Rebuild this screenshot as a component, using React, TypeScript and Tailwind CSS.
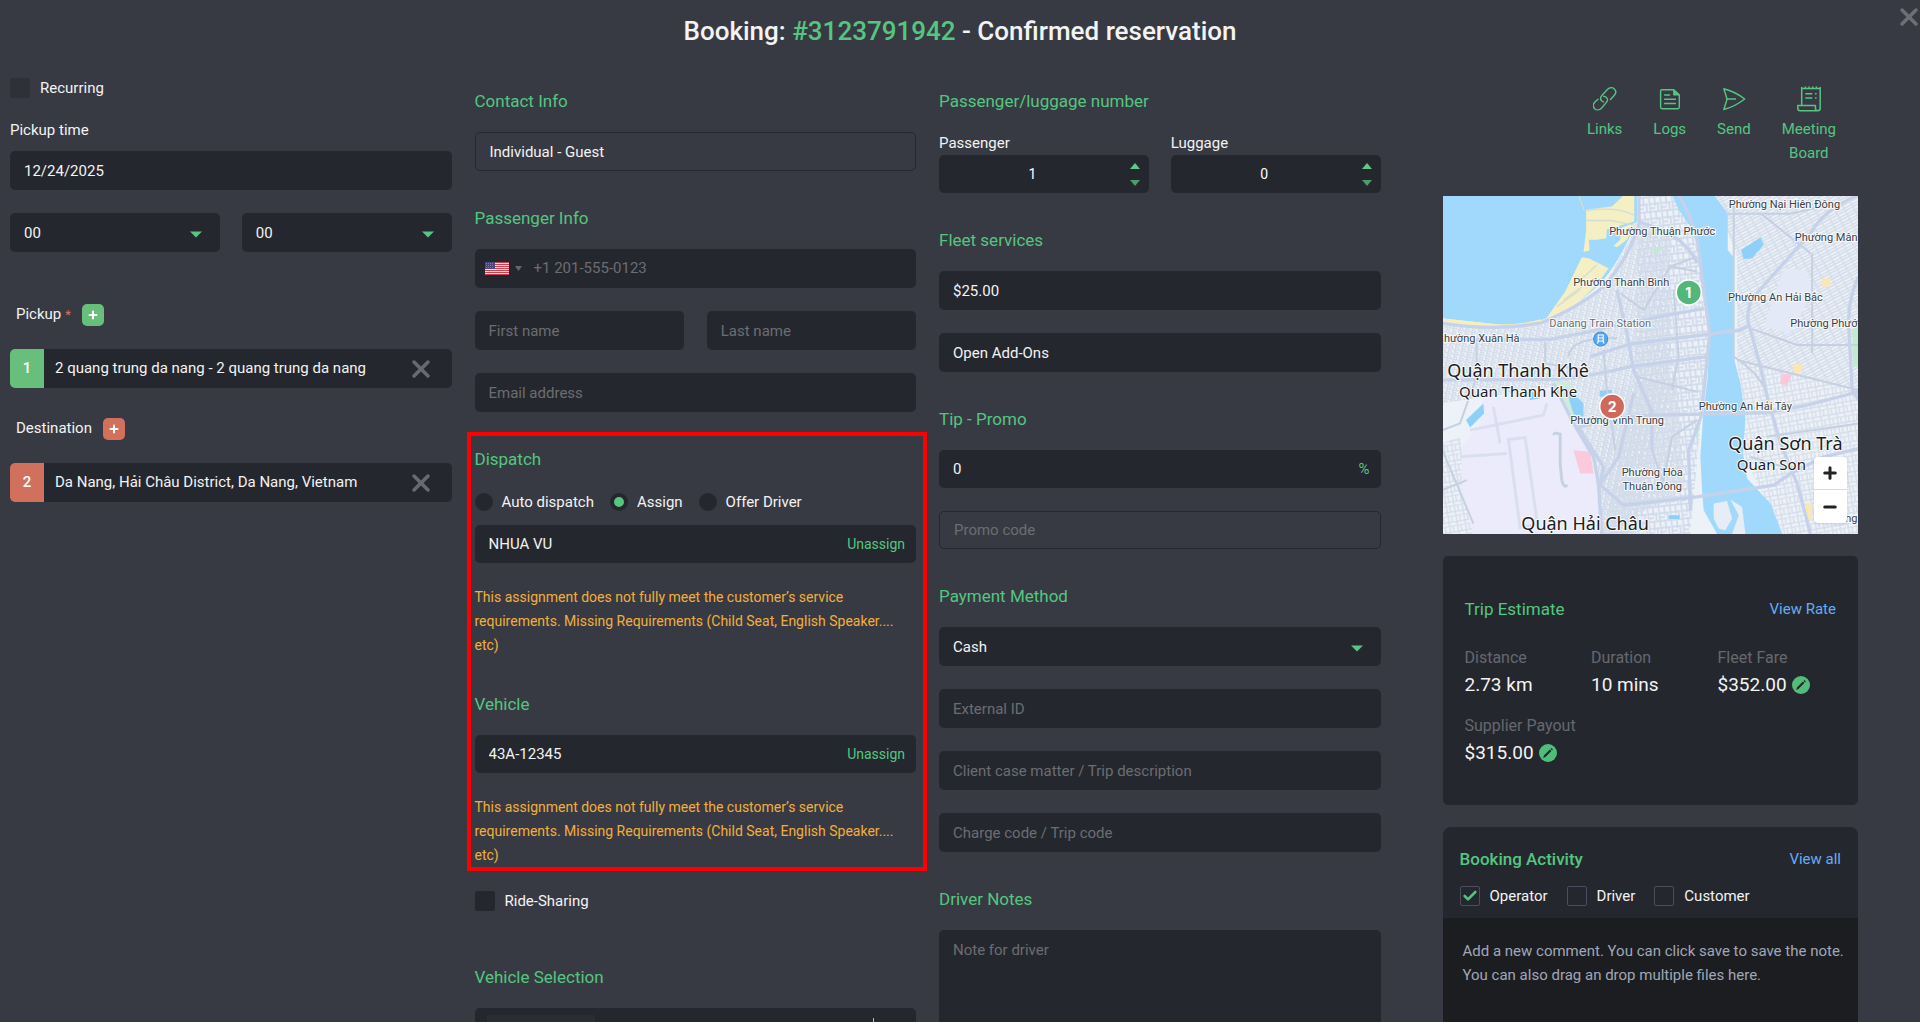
import { useState } from "react";
import type { ReactNode } from "react";
import clsx from "clsx";
import { Check, Minus, Plus, X } from "lucide-react";

const FIELD =
  "h-[39px] w-full rounded-[5px] bg-[#25272e] px-[14px] text-[15px] leading-6 text-[#f3f3f4] outline-none placeholder:text-[#6c6d72] placeholder:opacity-100";
const OUTLINED =
  "w-full rounded-[5px] border border-[#25272e] bg-transparent px-[14px] text-[15px] leading-6 text-[#f3f3f4] outline-none placeholder:text-[#6c6d72] placeholder:opacity-100";

const WARNING =
  "This assignment does not fully meet the customer’s service requirements. Missing Requirements (Child Seat, English Speaker.... etc)";

function Heading({ children }: { children: ReactNode }) {
  return (
    <h2 className="mb-[19px] text-[17px] leading-6 text-[#54c680]">
      {children}
    </h2>
  );
}

function Section({ title, children }: { title: string; children: ReactNode }) {
  return (
    <section>
      <Heading>{title}</Heading>
      <div className="flex flex-col gap-[23px]">{children}</div>
    </section>
  );
}

function Caret({ className }: { className?: string }) {
  return (
    <svg viewBox="0 0 12 7" className={clsx("h-[7px] w-3", className)} aria-hidden>
      <path d="M0 0.5h12l-6 6z" fill="currentColor" />
    </svg>
  );
}

function SelectBox({ label, options }: { label: string; options: string[] }) {
  return (
    <div className="relative w-full">
      <select aria-label={label} className={clsx(FIELD, "appearance-none")}>
        {options.map((o) => (
          <option key={o}>{o}</option>
        ))}
      </select>
      <Caret className="pointer-events-none absolute top-[18px] right-[18px] text-[#54c680]" />
    </div>
  );
}

function Counter({ label, initial }: { label: string; initial: number }) {
  const [value, setValue] = useState(initial);
  return (
    <div className="w-full">
      <label
        htmlFor={label}
        className="block text-[15px] leading-[23px] text-[#f3f3f4]"
      >
        {label}
      </label>
      <div className="flex h-[38px] items-center rounded-[5px] bg-[#25272e] pr-[9px]">
        <input
          id={label}
          value={value}
          onChange={(e) => setValue(Number(e.target.value) || 0)}
          className="w-full min-w-0 bg-transparent pr-1 text-center text-sm text-white outline-none"
        />
        <div className="flex flex-col gap-[11px]">
          <button
            type="button"
            aria-label={`More ${label}`}
            onClick={() => setValue((v) => v + 1)}
          >
            <svg viewBox="0 0 10 6" className="block h-[6px] w-[10px] text-[#5fc885]">
              <path d="M0 6h10L5 0z" fill="currentColor" />
            </svg>
          </button>
          <button
            type="button"
            aria-label={`Fewer ${label}`}
            onClick={() => setValue((v) => Math.max(0, v - 1))}
          >
            <svg viewBox="0 0 10 6" className="block h-[6px] w-[10px] text-[#4d9c69]">
              <path d="M0 0h10L5 6z" fill="currentColor" />
            </svg>
          </button>
        </div>
      </div>
    </div>
  );
}

function CheckBox({
  label,
  checked = false,
  boxClass,
}: {
  label: string;
  checked?: boolean;
  boxClass: string;
}) {
  return (
    <label className="flex items-center gap-[10px] text-[15px] leading-6 text-[#f3f3f4]">
      <span className="relative flex size-5">
        <input
          type="checkbox"
          defaultChecked={checked}
          className={clsx("peer size-5 appearance-none rounded-[2px]", boxClass)}
        />
        <Check
          className="pointer-events-none absolute inset-[2px] hidden size-4 text-[#4fc47c] peer-checked:block"
          strokeWidth={4}
        />
      </span>
      {label}
    </label>
  );
}

function Radio({ label, checked = false }: { label: string; checked?: boolean }) {
  return (
    <label className="flex items-center gap-[9px] text-[15px] leading-6 text-[#f3f3f4]">
      <input
        type="radio"
        name="dispatch"
        defaultChecked={checked}
        className="size-[18px] appearance-none rounded-full border-[4px] border-[#25272e] bg-[#25272e] checked:bg-[#54c680]"
      />
      {label}
    </label>
  );
}

function Stop({
  index,
  address,
  tone,
}: {
  index: number;
  address: string;
  tone: string;
}) {
  return (
    <div className="flex h-[39px] overflow-hidden rounded-[5px] bg-[#25272e]">
      <span
        className={clsx(
          "flex w-[34px] shrink-0 items-center justify-center text-[15px] font-medium text-white",
          tone,
        )}
      >
        {index}
      </span>
      <input
        aria-label={`Stop ${index}`}
        defaultValue={address}
        className="min-w-0 flex-1 bg-transparent pl-[11px] text-[15px] text-[#f3f3f4] outline-none"
      />
      <button
        type="button"
        aria-label="Remove stop"
        className="pr-[17px] pl-4 text-[#686a72]"
      >
        <X className="size-7" strokeWidth={3} />
      </button>
    </div>
  );
}

function StopLabel({
  text,
  tone,
  required,
}: {
  text: string;
  tone: string;
  required?: boolean;
}) {
  return (
    <div className="flex h-[23px] items-center pl-[6px] text-[15px] text-[#f3f3f4]">
      {text}
      {required && <span className="pl-1 text-[13px] text-[#e2705c]">*</span>}
      <button
        type="button"
        aria-label={`Add ${text}`}
        className={clsx(
          "ml-[11px] flex size-[22px] items-center justify-center rounded-[5px] text-white",
          tone,
        )}
      >
        <Plus className="size-[12px]" strokeWidth={4} />
      </button>
    </div>
  );
}

function Assignment({
  title,
  value,
  children,
}: {
  title: string;
  value: string;
  children?: ReactNode;
}) {
  return (
    <section>
      <Heading>{title}</Heading>
      {children}
      <div className="flex h-[38px] items-center rounded-[5px] bg-[#25272e] px-[11px]">
        <input
          aria-label={title}
          defaultValue={value}
          className="min-w-0 flex-1 bg-transparent pl-[3px] text-[15px] text-[#f3f3f4] outline-none"
        />
        <button type="button" className="text-sm text-[#54c680]">
          Unassign
        </button>
      </div>
      <p className="mt-[22px] text-sm leading-6 text-[#f3ae3d]">{WARNING}</p>
    </section>
  );
}

function UsFlag() {
  return (
    <svg viewBox="0 0 24 13" className="h-[13px] w-6" aria-hidden>
      <rect width="24" height="13" fill="#e9dfe2" />
      {[0, 2, 4, 6, 8, 10, 12].map((y) => (
        <rect key={y} y={y} width="24" height="1" fill="#c9404f" />
      ))}
      <rect width="10" height="7" fill="#4a477f" />
      <path
        d="M1 1.5h8M1 3.5h8M1 5.5h8"
        stroke="#8e8bb5"
        strokeWidth="0.7"
        strokeDasharray="1 1"
      />
    </svg>
  );
}

function LinksIcon() {
  return (
    <svg viewBox="0 0 24 24" fill="none" stroke="currentColor" strokeWidth="1.4" strokeLinecap="round" className="size-6">
      <path d="M8.3 13.2c-1.6-1.9-.2-4 1-5.2L14.6 2.3c2-2 4.9-2.1 6.7-.4 1.9 1.9 1.7 4.7-.2 6.7l-3.6 3.8" />
      <path d="M10.7 9.3c1.5.3 3.3 1.2 3.7 2.6.4 1.3-.3 2.8-1.4 4l-4.6 5.4c-2 2-4.9 2.1-6.7.4-1.9-1.9-1.7-4.7.2-6.7L5 12.2" />
      <path d="M8.3 13.2c.5 1 1.3 1.6 2.3 1.7" />
    </svg>
  );
}

function LogsIcon() {
  return (
    <svg viewBox="0 0 24 24" fill="none" stroke="currentColor" strokeWidth="1.4" strokeLinecap="round" strokeLinejoin="round" className="size-6">
      <path d="M4 2.7h11.5L21.3 8v12.3a1.4 1.4 0 0 1-1.4 1.4H4a1.4 1.4 0 0 1-1.4-1.4V4.1A1.4 1.4 0 0 1 4 2.7z" />
      <path d="M15.8 2.9V7.8h5.2z" fill="currentColor" />
      <path d="M6.6 8h5M6.6 12.2h10.8M6.6 16.5h10.8" />
    </svg>
  );
}

function SendIcon() {
  return (
    <svg viewBox="0 0 24 24" fill="none" stroke="currentColor" strokeWidth="1.4" strokeLinecap="round" strokeLinejoin="round" className="size-6">
      <path d="M1.8 1.8C9 3.6 16.5 7.3 22.7 12 16.5 16.8 9.5 20.6 1.8 22.5c1.2-3.5 2.4-7 3.2-10.5-1-3.5-2-6.9-3.2-10.2z" />
      <path d="M5 12h8.5" />
    </svg>
  );
}

function BoardIcon() {
  return (
    <svg viewBox="0 0 24 26" fill="none" stroke="currentColor" strokeWidth="1.5" strokeLinejoin="round" className="h-[26px] w-6">
      <path d="M4.7 19.4V2M23.2 2v20.3a2.5 2.5 0 0 1-2.5 2.5H3.2A2.5 2.5 0 0 1 .8 22.3v-2.9h17.6v2.9a2.5 2.5 0 0 0 2.3 2.5" />
      <path d="M4.7 1v1.6h18.5V1M8.4 .5v2M12 .5v2M15.7 .5v2M19.4 .5v2" />
      <path d="M8.3 7.8h7M8.3 12h7M18 7.8h1.6M18 12h1.6" />
    </svg>
  );
}

const ACTIONS = [
  { label: "Links", icon: <LinksIcon /> },
  { label: "Logs", icon: <LogsIcon /> },
  { label: "Send", icon: <SendIcon /> },
  { label: "Meeting Board", icon: <BoardIcon /> },
];

function EditButton({ label }: { label: string }) {
  return (
    <button
      type="button"
      aria-label={label}
      className="flex size-[18px] items-center justify-center rounded-full bg-[#52bd7b]"
    >
      <svg viewBox="0 0 18 18" className="size-[18px]" aria-hidden>
        <path d="M4.2 13.9l.7-2.3 6-6 1.5 1.5-6 6zM11.6 4.9l.8-.8 1.5 1.5-.8.8z" fill="#25272e" />
      </svg>
    </button>
  );
}

const TRIP = [
  { label: "Distance", value: "2.73 km" },
  { label: "Duration", value: "10 mins" },
  { label: "Fleet Fare", value: "$352.00", editable: true },
  { label: "Supplier Payout", value: "$315.00", editable: true },
];

type Place = {
  x: number;
  y: number;
  text: string;
  size?: number;
  fill?: string;
  anchor?: "start" | "end";
};

const PLACES: Place[] = [
  { x: 341, y: 12, text: "Phường Nại Hiên Đông" },
  { x: 219, y: 39, text: "Phường Thuận Phước" },
  { x: 414, y: 45, text: "Phường Mân", anchor: "end" },
  { x: 178, y: 90, text: "Phường Thanh Bình" },
  { x: 332, y: 105, text: "Phường An Hải Bắc" },
  { x: 157, y: 131, text: "Danang Train Station", fill: "#6a6d74" },
  { x: 414, y: 131, text: "Phường Phướ", anchor: "end" },
  { x: 1, y: 146, text: "hường Xuân Hà", anchor: "start" },
  { x: 75, y: 181, size: 18, text: "Quận Thanh Khê" },
  { x: 75, y: 201, size: 15, text: "Quan Thanh Khe" },
  { x: 302, y: 214, text: "Phường An Hải Tây" },
  { x: 174, y: 228, text: "Phường Vĩnh Trung" },
  { x: 342, y: 254, size: 18, text: "Quận Sơn Trà" },
  { x: 328, y: 274, size: 15, text: "Quan Son" },
  { x: 209, y: 280, text: "Phường Hòa" },
  { x: 209, y: 294, text: "Thuận Đông" },
  { x: 142, y: 334, size: 18, text: "Quận Hải Châu" },
  { x: 414, y: 326, text: "ng", anchor: "end" },
];

const MAJOR_ROADS = [
  "M37 400Q200 425 335 398Q450 350 520 290Q600 200 626 100V15",
  "M626 95Q700 120 745 150Q790 190 800 220",
  "M745 15Q800 110 806 190L820 300L838 430L825 560L812 680L775 780L780 960",
  "M37 450L360 448L480 425L560 405L820 355",
  "M480 500L600 462L840 432L930 420L960 405",
  "M37 570L380 568Q480 560 600 530L830 500",
  "M560 300L590 430L610 540L665 665V780",
  "M440 712Q560 680 665 675L1010 668L1130 645L1284 605",
  "M370 580L430 700L490 800L505 880L515 1031",
  "M505 880L580 945L800 920L1030 885L1080 850L1180 800L1284 775",
  "M1284 15Q1180 60 1140 130L970 320Q940 370 960 420Q990 520 1010 620L1050 760L1100 880L1140 1031",
  "M1284 260Q1250 330 1255 420L1265 600L1284 630",
  "M505 890L565 800L610 610",
  "M445 712L520 830L510 880",
];

const MINOR_ROADS = [
  "M910 40V510M893 72H1080L1200 45M990 70L1140 190",
  "M1145 190V490M960 415L1100 465H1284M920 510L1284 600",
  "M415 500Q420 440 560 445M345 455V520L470 540M140 455V560",
  "M570 310L640 360L720 230L800 200M720 230L800 245",
  "M520 480L530 600L555 780M730 300L745 500L725 600",
  "M700 870L725 740L800 690M620 560L800 605M665 780L700 880",
  "M910 500Q1000 560 1010 620M1010 740L1284 700M960 800L1090 840",
  "M140 560L90 700L37 720M37 780L130 1000M37 900L110 870",
];

function TripMap() {
  return (
    <div className="relative">
      <svg
        viewBox="0 0 415 338"
        preserveAspectRatio="xMidYMid slice"
        className="block h-[338px] w-full"
        fontFamily='"Noto Sans", sans-serif'
        role="img"
        aria-label="Trip map"
      >
        <defs>
          <pattern id="dense" width="19" height="15" patternUnits="userSpaceOnUse" patternTransform="rotate(12)">
            <path d="M0 2H19M3 0V15M12 7V15M0 9H12" stroke="#d3dce9" strokeWidth="4" fill="none" />
          </pattern>
          <pattern id="blocks" width="34" height="44" patternUnits="userSpaceOnUse" patternTransform="rotate(-6)">
            <path d="M0 3H34M4 0V44M20 0V30M4 24H34M28 24V44M4 36H20" stroke="#d0daea" strokeWidth="5" fill="none" />
          </pattern>
          <pattern id="east" width="26" height="18" patternUnits="userSpaceOnUse" patternTransform="rotate(-28)">
            <path d="M0 2H26M3 0V18M3 10H26" stroke="#d3dce9" strokeWidth="4" fill="none" />
          </pattern>
          <pattern id="southeast" width="24" height="30" patternUnits="userSpaceOnUse" patternTransform="rotate(-10)">
            <path d="M0 2H24M3 0V30M13 12V30M3 14H24" stroke="#d5ddea" strokeWidth="4" fill="none" />
          </pattern>
        </defs>
        <g transform="translate(-13 -6) scale(0.3334)">
          <rect x="30" y="10" width="1260" height="1030" fill="#edf2f8" />
          <path d="M37 400H335L520 290L626 100L720 120V600L610 1031H505L430 700L370 590L37 640z" fill="url(#dense)" />
          <path d="M626 15H745L806 190L838 430L812 680L780 1031H515L610 610z" fill="url(#blocks)" />
          <path d="M515 600L740 560L760 900L515 1031z" fill="url(#dense)" />
          <path d="M850 15H1284V600L920 510V200z" fill="url(#east)" />
          <path d="M920 510L1284 600V1031H1060L940 800z" fill="url(#southeast)" />
          <path d="M37 760L90 740L130 1031H37z" fill="url(#southeast)" />

          {/* airport */}
          <path d="M160 625L370 602L430 710L490 805L500 900L508 1031H130L95 900V770L150 700z" fill="#ebebfc" />
          <path d="M235 748L285 742L322 1002L270 1012zM120 720L340 675M210 760L190 650M90 800L230 790M340 675L350 640" stroke="#dadff0" strokeWidth="9" fill="none" />
          <path d="M372 735Q370 725 390 732V820L395 870Q400 895 412 885" stroke="#c7d2e0" strokeWidth="9" fill="none" />
          <path d="M370 574H420L455 640L458 700L430 700z" fill="#cfeadf" />
          <path d="M1060 235L1125 240L1150 300L1080 430L1000 410z" fill="#e3e9f6" />

          {/* water */}
          <path d="M37 15H620V95Q560 230 510 280Q440 350 335 390Q270 408 200 403L37 385z" fill="#a1d9fc" />
          <path d="M725 15H850L892 70V180L908 200L912 510L930 580L945 680L938 790L950 865L1020 940L1056 1031H860L820 960L815 900L810 800L818 680L832 560L838 430L820 300L810 190L780 110L745 60z" fill="#a1d9fc" />
          <path d="M850 940L890 932L905 985L885 1020L865 1015L850 985zM900 928L935 950L945 1031H905L925 975z" fill="#e6edf5" />
          <path d="M932 180L990 142L1000 165L965 205L940 208zM108 690L160 640L162 670L120 712zM405 590L440 620L460 640V680L430 672zM290 605H330V625L300 630zM508 602L545 600V620H508zM715 975H748V986H715z" fill="#8fd0f8" />

          {/* sand */}
          <path d="M37 385L200 403Q270 405 332 388L336 400Q260 420 180 414L37 398z" fill="#f6eebc" />
          <path d="M468 60L545 50L580 17H612V95L530 118L528 145L500 150H476L478 182L460 186L468 120zM550 168L570 150L575 112L618 98L590 150L560 172z" fill="#f5f0c4" />
          <path d="M455 202L475 205L535 235L500 285L430 350L345 390L405 305z" fill="#f5f0c4" />
          <path d="M470 62Q560 50 610 75M470 92H540L610 105M445 15L462 62M430 290L500 225M400 330L490 265M380 350L450 300" stroke="#d6dcd0" strokeWidth="4" fill="none" />
          <path d="M430 780L480 785L490 850L450 850zM1055 550L1085 553L1070 587L1048 580z" fill="#fbc9dc" />
          <path d="M1175 265H1200V290H1175zM1090 520L1118 525L1110 550H1090zM1125 940L1145 938V990H1125z" fill="#fbe6b8" />
          <path d="M1265 420L1284 410V530H1268zM672 175L688 170V188H672zM790 715L810 710L800 745z" fill="#bfeccb" />

          {MINOR_ROADS.map((d) => (
            <path key={d} d={d} stroke="#c5d1e2" strokeWidth="6" fill="none" />
          ))}
          {MAJOR_ROADS.map((d) => (
            <path key={d} d={d} stroke="#c6d2ea" strokeWidth="10" strokeLinejoin="round" fill="none" />
          ))}
        </g>

        <circle cx="157.5" cy="143" r="7" fill="#5aa9ec" stroke="#3f8fd6" strokeWidth="1" />
        <path d="M155 139h5v6h-5zM155 142h5M155.5 145l-1.5 2.5M159.5 145l1.5 2.5" stroke="#fff" strokeWidth="1.1" fill="none" />

        {PLACES.map((p) => (
          <text
            key={p.text}
            x={p.x}
            y={p.y}
            fontSize={p.size ?? 11}
            fontFamily={p.size ? undefined : "Roboto, sans-serif"}
            textAnchor={p.anchor ?? "middle"}
            fill={p.fill ?? (p.size ? "#1c1d20" : "#3b3e44")}
            stroke="#f7fafd"
            strokeWidth="2"
            strokeLinejoin="round"
            paintOrder="stroke"
          >
            {p.text}
          </text>
        ))}

        <g fontSize="14" fontWeight="700" fontFamily="Inter, sans-serif" fill="#fff" textAnchor="middle">
          <circle cx="245.5" cy="96.5" r="12.5" fill="#52b779" stroke="#fff" strokeWidth="1.5" />
          <text x="245" y="102">1</text>
          <circle cx="169" cy="210.5" r="12.5" fill="#d0695a" stroke="#fff" strokeWidth="1.5" />
          <text x="169" y="216">2</text>
        </g>
      </svg>

      <div className="absolute right-[11px] bottom-[11px] flex w-[33px] flex-col divide-y divide-[#d9dbe0] rounded-[4px] bg-white shadow">
        <button type="button" aria-label="Zoom in" className="flex h-[33px] items-center justify-center text-[#222]">
          <Plus className="size-[18px]" strokeWidth={4} />
        </button>
        <button type="button" aria-label="Zoom out" className="flex h-[33px] items-center justify-center text-[#222]">
          <Minus className="size-[18px]" strokeWidth={4} />
        </button>
      </div>
    </div>
  );
}

export default function App() {
  return (
    <main className="relative h-screen overflow-x-hidden overflow-y-auto bg-[#383a43] pr-[62px] pl-[10px] font-[Roboto,'Open_Sans',sans-serif] [scrollbar-width:none]">
      <button
        type="button"
        aria-label="Close"
        className="absolute top-[3px] right-[-3px] text-[#6d6f76]"
      >
        <X className="size-7" strokeWidth={3} />
      </button>

      <h1 className="-mr-[52px] pt-[13px] text-center text-[26px] leading-9 font-medium text-[#f3f3f4]">
        Booking: <span className="text-[#54c680]">#3123791942</span> - Confirmed
        reservation
      </h1>

      <div className="grid grid-cols-[34fr_34fr_34fr_35fr] gap-x-[23px] pt-[27px]">
        {/* Schedule and stops */}
        <div className="min-w-0">
          <CheckBox label="Recurring" boxClass="bg-[#2f3139]" />
          <label
            htmlFor="pickup-time"
            className="mt-[18px] mb-[9px] block text-[15px] leading-6 text-[#f3f3f4]"
          >
            Pickup time
          </label>
          <input id="pickup-time" defaultValue="12/24/2025" className={FIELD} />
          <div className="mt-[23px] grid grid-cols-2 gap-[22px]">
            <SelectBox label="Hour" options={["00", "01", "02"]} />
            <SelectBox label="Minute" options={["00", "15", "30", "45"]} />
          </div>

          <div className="mt-[51px] flex flex-col gap-[23px]">
            <StopLabel text="Pickup" tone="bg-[#68bf7c]" required />
            <Stop
              index={1}
              address="2 quang trung da nang - 2 quang trung da nang"
              tone="bg-[#68bf7c]"
            />
          </div>
          <div className="mt-[29px] flex flex-col gap-[23px]">
            <StopLabel text="Destination" tone="bg-[#d2705e]" />
            <Stop
              index={2}
              address="Da Nang, Hải Châu District, Da Nang, Vietnam"
              tone="bg-[#d2705e]"
            />
          </div>
        </div>

        {/* Contact, passenger and dispatch */}
        <div className="min-w-0 pt-[13px]">
          <div className="flex flex-col gap-[35px]">
            <Section title="Contact Info">
              <input
                aria-label="Contact"
                defaultValue="Individual - Guest"
                className={clsx(OUTLINED, "h-[39px]")}
              />
            </Section>
            <Section title="Passenger Info">
              <div className="flex h-[39px] items-center rounded-[5px] bg-[#25272e] pl-[10px]">
                <button
                  type="button"
                  aria-label="Country"
                  className="flex items-center gap-[6px] text-[#66686c]"
                >
                  <UsFlag />
                  <svg viewBox="0 0 7 5" className="h-[5px] w-[7px]">
                    <path d="M0 0h7L3.5 5z" fill="currentColor" />
                  </svg>
                </button>
                <input
                  aria-label="Phone"
                  placeholder="+1 201-555-0123"
                  className="min-w-0 flex-1 bg-transparent pl-3 text-[15px] text-white outline-none placeholder:text-[#6c6d72]"
                />
              </div>
              <div className="grid grid-cols-2 gap-[23px]">
                <input aria-label="First name" placeholder="First name" className={FIELD} />
                <input aria-label="Last name" placeholder="Last name" className={FIELD} />
              </div>
              <input aria-label="Email address" placeholder="Email address" className={FIELD} />
            </Section>
          </div>

          <div className="mt-5 -mr-[11px] -ml-2 flex flex-col gap-[35px] border-4 border-[#ff0000] pt-[11px] pr-[7px] pl-1">
            <Assignment title="Dispatch" value="NHUA VU">
              <div className="mb-[11px] flex gap-4">
                <Radio label="Auto dispatch" />
                <Radio label="Assign" checked />
                <Radio label="Offer Driver" />
              </div>
            </Assignment>
            <Assignment title="Vehicle" value="43A-12345" />
          </div>

          <div className="mt-[18px] mb-[52px]">
            <CheckBox label="Ride-Sharing" boxClass="bg-[#25272e]" />
          </div>
          <Section title="Vehicle Selection">
            <div className="flex h-[39px] justify-between rounded-[5px] bg-[#25272e] pt-[7px] pr-[42px] pl-3">
              <span className="h-6 w-[108px] rounded-[2px] bg-[#2b2d35]" />
              <span className="mt-[3px] h-5 w-px bg-[#b5b6ba]" />
            </div>
          </Section>
        </div>

        {/* Services and payment */}
        <div className="flex min-w-0 flex-col gap-[35px] pt-[13px]">
          <Section title="Passenger/luggage number">
            <div className="grid grid-cols-2 gap-[22px]">
              <Counter label="Passenger" initial={1} />
              <Counter label="Luggage" initial={0} />
            </div>
          </Section>
          <Section title="Fleet services">
            <input aria-label="Fleet services" defaultValue="$25.00" className={FIELD} />
            <button type="button" className={clsx(FIELD, "text-left")}>
              Open Add-Ons
            </button>
          </Section>
          <Section title="Tip - Promo">
            <div className="flex h-[38px] items-center rounded-[5px] bg-[#25272e] pr-[11px] text-[15px] text-[#54c680]">
              <input
                aria-label="Tip"
                defaultValue="0"
                className="min-w-0 flex-1 bg-transparent pl-[14px] text-[#f3f3f4] outline-none"
              />
              %
            </div>
            <input
              aria-label="Promo code"
              placeholder="Promo code"
              className={clsx(OUTLINED, "h-[38px]")}
            />
          </Section>
          <Section title="Payment Method">
            <SelectBox label="Payment method" options={["Cash", "Credit card"]} />
            <input aria-label="External ID" placeholder="External ID" className={FIELD} />
            <input
              aria-label="Client case matter"
              placeholder="Client case matter / Trip description"
              className={FIELD}
            />
            <input
              aria-label="Charge code"
              placeholder="Charge code / Trip code"
              className={FIELD}
            />
          </Section>
          <Section title="Driver Notes">
            <textarea
              aria-label="Driver notes"
              placeholder="Note for driver"
              className="h-28 w-full resize-none rounded-[5px] bg-[#25272e] px-[14px] py-2 text-[15px] leading-6 text-[#f3f3f4] outline-none placeholder:text-[#6c6d72]"
            />
          </Section>
        </div>

        {/* Map, estimate and activity */}
        <div className="min-w-0 pt-[9px] pl-[39px]">
          <nav className="flex justify-end gap-[31px] pr-[22px]">
            {ACTIONS.map((a) => (
              <button
                key={a.label}
                type="button"
                className="flex w-min flex-col items-center text-[15px] leading-6 text-[#54c680]"
              >
                <span className="mb-[5px] flex h-[27px] items-center">{a.icon}</span>
                {a.label}
              </button>
            ))}
          </nav>

          <div className="mt-[31px]">
            <TripMap />
          </div>

          <section className="mt-[22px] rounded-[5px] bg-[#25272e] px-[22px] pt-[41px] pb-[39px]">
            <div className="flex items-center justify-between">
              <h2 className="text-[17px] leading-6 text-[#54c680]">Trip Estimate</h2>
              <a href="#rate" className="text-[15px] leading-6 text-[#64adf5]">
                View Rate
              </a>
            </div>
            <dl className="-mr-2 mt-[25px] grid grid-cols-3 gap-y-4">
              {TRIP.map((t) => (
                <div key={t.label}>
                  <dt className="text-[16px] leading-6 whitespace-nowrap text-[#66686e]">
                    {t.label}
                  </dt>
                  <dd className="mt-[2px] flex items-center gap-[5px] text-[19px] leading-[26px] text-[#f3f3f4]">
                    {t.value}
                    {t.editable && <EditButton label={`Edit ${t.label}`} />}
                  </dd>
                </div>
              ))}
            </dl>
          </section>

          <section className="mt-[22px] overflow-hidden rounded-t-[8px] bg-[#25272e]">
            <div className="px-[17px] pt-5 pb-[10px]">
              <div className="flex items-center justify-between">
                <h2 className="text-[17px] leading-6 font-medium text-[#54c680]">
                  Booking Activity
                </h2>
                <a href="#activity" className="text-[15px] leading-6 text-[#64adf5]">
                  View all
                </a>
              </div>
              <div className="mt-[13px] flex gap-[19px]">
                <CheckBox label="Operator" checked boxClass="border border-[#4b4c60]" />
                <CheckBox label="Driver" boxClass="border border-[#4b4c60]" />
                <CheckBox label="Customer" boxClass="border border-[#4b4c60]" />
              </div>
            </div>
            <textarea
              aria-label="New comment"
              placeholder="Add a new comment. You can click save to save the note. You can also drag an drop multiple files here."
              className="block h-32 w-full resize-none bg-[#1c1d21] py-[21px] pr-2 pl-5 text-[15px] leading-6 text-white outline-none placeholder:text-[#a0a7b8]"
            />
          </section>
        </div>
      </div>
    </main>
  );
}
